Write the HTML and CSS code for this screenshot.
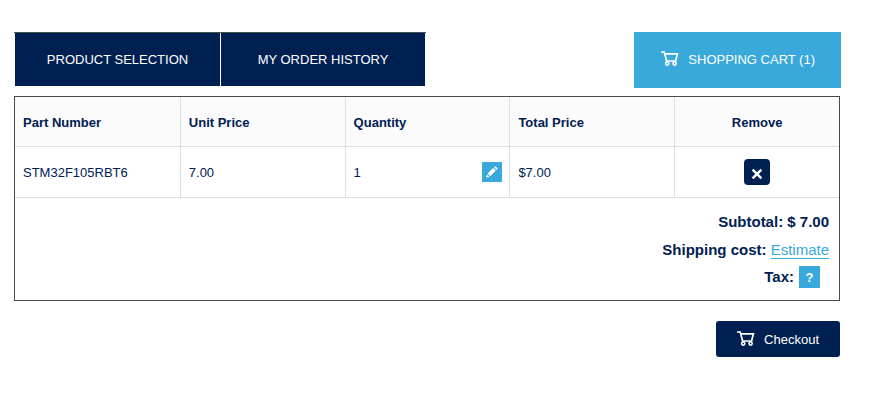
FILE: index.html
```html
<!DOCTYPE html>
<html lang="en">
<head>
  <meta charset="UTF-8" />
  <meta name="viewport" content="width=device-width, initial-scale=1.0"/>
  <title>Shopping Cart</title>
  <link rel="stylesheet" href="styles.css">
</head>
<body>
  <svg class="sprite" aria-hidden="true">
    <symbol id="cart" viewBox="0 0 18 16">
      <path d="M0 1H3.2L5.6 10H14.6L16.4 2.9H4" fill="none" stroke="currentColor" stroke-width="1.7"/>
      <circle cx="6.2" cy="12.6" r="1.6" fill="none" stroke="currentColor" stroke-width="1.6"/>
      <circle cx="13.6" cy="12.6" r="1.6" fill="none" stroke="currentColor" stroke-width="1.6"/>
    </symbol>
  </svg>

  <div class="page">
    <div class="topbar">
      <nav class="tabs">
        <a href="#products">PRODUCT SELECTION</a>
        <a href="#history">MY ORDER HISTORY</a>
      </nav>
      <a class="cart-tab" href="#cart-items">
        <svg class="cart-icon"><use href="#cart"/></svg>
        SHOPPING CART (1)
      </a>
    </div>

    <div class="cart" id="cart-items">
      <table>
        <thead>
          <tr>
            <th>Part Number</th>
            <th>Unit Price</th>
            <th>Quantity</th>
            <th>Total Price</th>
            <th class="center">Remove</th>
          </tr>
        </thead>
        <tbody>
          <tr>
            <td>STM32F105RBT6</td>
            <td>7.00</td>
            <td>
              <div class="quantity">
                <span>1</span>
                <button class="square edit" aria-label="Edit quantity">
                  <svg width="12" height="12" viewBox="0 0 12 12" fill="currentColor">
                    <path d="M1.6 7.6L4.2 10.2L9.8 4.6L7.2 2Z"/>
                    <path d="M8 1.3L8.6 0.7Q9.3 0.1 10 0.7L11.2 1.9Q11.8 2.6 11.2 3.3L10.6 3.9Z"/>
                    <path d="M1 8.5L3.4 10.9L0.3 11.6Z"/>
                  </svg>
                </button>
              </div>
            </td>
            <td>$7.00</td>
            <td class="center">
              <button class="remove" aria-label="Remove">
                <svg width="12" height="12" viewBox="0 0 12 12">
                  <path d="M1.6 1.6L10.4 10.4M10.4 1.6L1.6 10.4" stroke="currentColor" stroke-width="2.4"/>
                </svg>
              </button>
            </td>
          </tr>
        </tbody>
      </table>
      <div class="totals">
        <div>Subtotal: $ 7.00</div>
        <div>Shipping cost: <a href="#estimate">Estimate</a></div>
        <div class="tax">Tax: <button class="square help">?</button></div>
      </div>
    </div>

    <div class="actions">
      <button class="checkout">
        <svg class="cart-icon"><use href="#cart"/></svg>
        Checkout
      </button>
    </div>
  </div>
</body>
</html>
```
FILE: styles.css
```css
body {
  margin: 0;
  font-family: "Liberation Sans", Arial, sans-serif;
  font-size: 13px;
  color: #002052;
  background: white;
}
.sprite {
  display: none;
}
.page {
  padding: 32px 45px 32px 14px;
}
button {
  font-family: inherit;
  border: none;
  padding: 0;
  color: white;
  cursor: pointer;
}
.topbar {
  display: flex;
  justify-content: space-between;
  align-items: flex-start;
  margin-right: -1px;
}
.tabs {
  display: flex;
  gap: 1px;
  padding: 0 1px;
  border-top: 1px solid #464b4b;
}
.tabs a {
  box-sizing: border-box;
  width: 205px;
  line-height: 53px;
  text-align: center;
  color: white;
  background: #002052;
  text-decoration: none;
}
.tabs a + a {
  width: 204px;
}
.cart-tab {
  display: flex;
  align-items: center;
  gap: 9px;
  box-sizing: border-box;
  height: 56px;
  padding: 0 26px 2px 27px;
  color: white;
  background: #39a9dc;
  text-decoration: none;
}
.cart-icon {
  width: 18px;
  height: 16px;
}
.cart {
  margin-top: 8px;
  border: 1px solid #464b4b;
}
table {
  width: 100%;
  table-layout: fixed;
  border-collapse: separate;
  border-spacing: 0;
}
th, td {
  padding: 0 8px;
  text-align: left;
  border-left: 1px solid #dcdfe6;
  border-bottom: 1px solid #dcdfe6;
}
th:first-child, td:first-child {
  border-left: none;
}
th {
  height: 47px;
  padding-top: 2px;
  background: #fbfbfb;
}
td {
  height: 50px;
}
th.center, td.center {
  text-align: center;
}
.quantity {
  display: flex;
  align-items: center;
  justify-content: space-between;
  margin-right: -1px;
}
.square {
  display: inline-flex;
  align-items: center;
  justify-content: center;
  width: 20px;
  height: 20px;
  background: #39a9dc;
}
.remove {
  display: inline-flex;
  align-items: center;
  justify-content: center;
  width: 26px;
  height: 26px;
  padding-top: 3px;
  border-radius: 4px;
  background: #002052;
  vertical-align: middle;
}
.totals {
  padding: 10px 10px 10px;
  font-size: 15px;
  font-weight: bold;
  line-height: 28px;
  text-align: right;
}
.totals a {
  font-weight: normal;
  color: #39a9dc;
  text-decoration: none;
  border-bottom: 1px solid #39a9dc;
}
.tax {
  display: flex;
  align-items: center;
  justify-content: flex-end;
  gap: 5px;
  height: 26px;
  padding-right: 9px;
}
.help {
  width: 21px;
  height: 22px;
  font-size: 13px;
  font-weight: bold;
}
.actions {
  display: flex;
  justify-content: flex-end;
  margin-top: 20px;
}
.checkout {
  display: flex;
  align-items: center;
  gap: 9px;
  height: 36px;
  padding: 0 21px;
  border-radius: 3px;
  font-size: 13px;
  background: #002052;
}
```
